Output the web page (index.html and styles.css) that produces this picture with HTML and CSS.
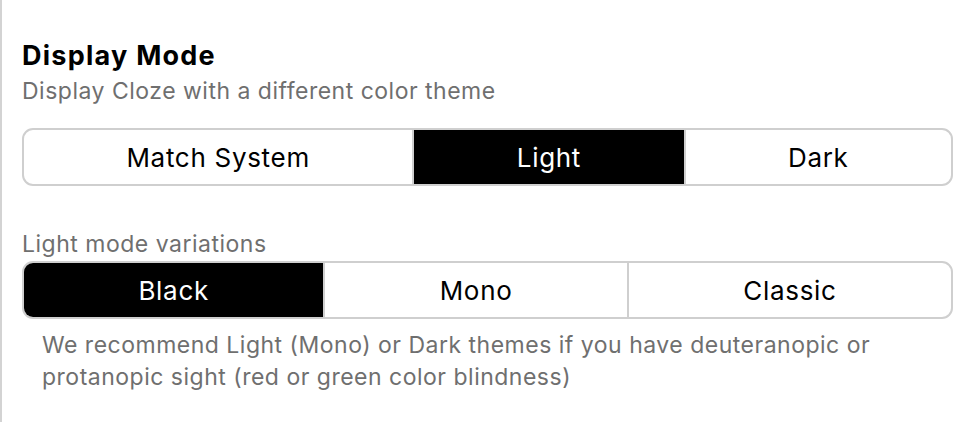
FILE: index.html
```
<!DOCTYPE html>
<html>
<head>
<meta charset="utf-8">
<link rel="stylesheet" href="styles.css">
</head>
<body>
<div class="panel">
  <h2 class="title">Display Mode</h2>
  <p class="subtitle">Display Cloze with a different color theme</p>
  <div class="seg">
    <div class="opt">Match System</div>
    <div class="opt active">Light</div>
    <div class="opt">Dark</div>
  </div>
  <p class="label">Light mode variations</p>
  <div class="seg">
    <div class="opt active">Black</div>
    <div class="opt">Mono</div>
    <div class="opt">Classic</div>
  </div>
  <p class="note">We recommend Light (Mono) or Dark themes if you have deuteranopic or protanopic sight (red or green color blindness)</p>
</div>
</body>
</html>
```
FILE: styles.css
```
html, body {
  margin: 0;
  padding: 0;
  background: #fff;
}
body {
  font-family: Inter, "Liberation Sans", sans-serif;
  height: 422px;
  overflow: hidden;
}
.panel {
  border-left: 2px solid #d3d3d3;
  height: 422px;
  box-sizing: border-box;
  padding: 39px 19px 0 20px;
}
.title {
  margin: 0;
  font-size: 27px;
  font-weight: 700;
  letter-spacing: 1.25px;
  line-height: 34px;
  color: #000;
}
.subtitle {
  margin: 2px 0 0;
  font-size: 23px;
  letter-spacing: 0.5px;
  line-height: 32px;
  color: #6f6f6f;
}
.seg {
  display: flex;
  margin-top: 21px;
  border: 2px solid #cfcfcf;
  border-radius: 11px;
  overflow: hidden;
  height: 58px;
  box-sizing: border-box;
}
.opt {
  flex: 1 1 auto;
  display: flex;
  align-items: center;
  justify-content: center;
  font-size: 26px;
  letter-spacing: 0.7px;
  color: #000;
}
.opt + .opt {
  border-left: 2px solid #cfcfcf;
}
.opt.active {
  background: #000;
  color: #fff;
}
.label {
  margin: 43px 0 0;
  font-size: 23px;
  letter-spacing: 0.5px;
  line-height: 30px;
  color: #6f6f6f;
}
.label + .seg {
  margin-top: 2px;
}
.note {
  margin: 10px 0 0;
  padding: 0 20px;
  font-size: 23px;
  letter-spacing: 0.5px;
  line-height: 32px;
  color: #6f6f6f;
}
```
